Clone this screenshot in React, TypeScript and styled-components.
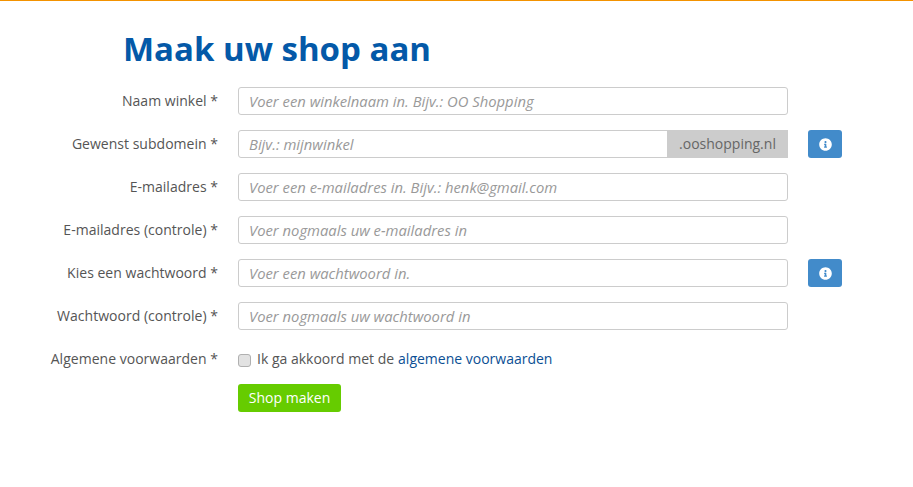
import React from "react";
import styled, { createGlobalStyle } from "styled-components";
import { FaInfoCircle } from "react-icons/fa";

const Global = createGlobalStyle`
  html, body { margin: 0; padding: 0; background: #fff; }
  body { font-family: "Open Sans", "Liberation Sans", sans-serif; font-size: 14px; color: #555; }
`;

const Page = styled.div`
  border-top: 1px solid #f39200;
  height: 486px;
  box-sizing: border-box;
  padding-top: 28px;
`;

const Title = styled.h1`
  margin: 0 0 18px 123px;
  font-size: 33px;
  line-height: 40px;
  font-weight: 700;
  color: #0459a8;
`;

const Form = styled.form`
  display: flex;
  flex-direction: column;
  gap: 15px;
`;

const Row = styled.div`
  display: grid;
  grid-template-columns: 218px 550px 34px;
  column-gap: 20px;
  align-items: center;
  min-height: 28px;
`;

const Label = styled.label`
  text-align: right;
  line-height: 20px;
  letter-spacing: 0.02px;
`;

const Field = styled.div`
  display: flex;
  height: 28px;
  box-sizing: border-box;
  border: 1px solid #ccc;
  border-radius: 3px;
`;

const Input = styled.input`
  flex: 1;
  min-width: 0;
  border: 0;
  outline: 0;
  padding: 0 10px;
  background: transparent;
  font: italic 14.8px "Open Sans", "Liberation Sans", sans-serif;
  color: #555;
  &::placeholder { color: #999; opacity: 1; }
`;

const Addon = styled.span`
  width: 121px;
  margin: -1px -1px -1px 0;
  background: #ccc;
  color: #666;
  display: flex;
  align-items: center;
  justify-content: center;
  padding-bottom: 1px;
  box-sizing: border-box;
`;

const InfoButton = styled.button`
  width: 34px;
  height: 28px;
  padding: 0;
  border: 0;
  border-radius: 3px;
  background: #428bca;
  color: #fff;
  display: flex;
  align-items: center;
  justify-content: center;
  font-size: 13px;
`;

const Agree = styled.div`
  display: flex;
  align-items: center;
  line-height: 20px;
`;

const Check = styled.input`
  appearance: none;
  box-sizing: border-box;
  width: 13px;
  height: 13px;
  margin: 2px 6px 0 0;
  border: 1px solid #b0b0b0;
  border-radius: 3px;
  background: #e2e2e2;
`;

const TermsLink = styled.a`
  color: #0b4f94;
  text-decoration: none;
  margin-left: 4px;
`;

const Submit = styled.button`
  grid-column: 2;
  justify-self: start;
  width: 103px;
  height: 28px;
  padding: 0 0 1px;
  margin-top: -4px;
  border: 0;
  border-radius: 3px;
  background: #66cc00;
  color: #fff;
  font: 14px "Open Sans", "Liberation Sans", sans-serif;
`;

const SubmitRow = styled(Row)`
  margin-top: -2px;
`;

const fields = [
  { label: "Naam winkel *", placeholder: "Voer een winkelnaam in. Bijv.: OO Shopping" },
  { label: "Gewenst subdomein *", placeholder: "Bijv.: mijnwinkel", addon: ".ooshopping.nl", info: true },
  { label: "E-mailadres *", placeholder: "Voer een e-mailadres in. Bijv.: henk@gmail.com" },
  { label: "E-mailadres (controle) *", placeholder: "Voer nogmaals uw e-mailadres in" },
  { label: "Kies een wachtwoord *", placeholder: "Voer een wachtwoord in.", info: true },
  { label: "Wachtwoord (controle) *", placeholder: "Voer nogmaals uw wachtwoord in" },
];

export default function App() {
  return (
    <Page>
      <Global />
      <Title>Maak uw shop aan</Title>
      <Form>
        {fields.map((f) => (
          <Row key={f.label}>
            <Label>{f.label}</Label>
            <Field>
              <Input placeholder={f.placeholder} />
              {f.addon && <Addon>{f.addon}</Addon>}
            </Field>
            {f.info && (
              <InfoButton type="button" aria-label="Info">
                <FaInfoCircle />
              </InfoButton>
            )}
          </Row>
        ))}
        <Row>
          <Label>Algemene voorwaarden *</Label>
          <Agree>
            <Check type="checkbox" />
            Ik ga akkoord met de<TermsLink href="#">algemene voorwaarden</TermsLink>
          </Agree>
        </Row>
        <SubmitRow>
          <Submit type="button">Shop maken</Submit>
        </SubmitRow>
      </Form>
    </Page>
  );
}
